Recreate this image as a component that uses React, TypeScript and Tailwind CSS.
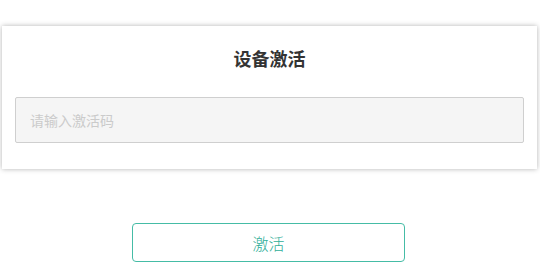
export default function App() {
  return (
    <div className="h-[270px] w-[540px] bg-white pt-[26px] font-['Noto_Sans_CJK_SC',sans-serif]">
      <div className="ml-[2px] mr-[3px] bg-white px-[13px] pb-[26px] pt-[20px] shadow-[0_0_5px_rgba(0,0,0,0.3)]">
        <h1 className="text-center text-[18px] leading-[24px] font-bold text-[#333]">设备激活</h1>
        <input
          className="mt-[27px] block h-[46px] w-full rounded-[2px] border border-[#cfcfcf] bg-[#f5f5f5] px-[14px] text-[14px] text-[#333] outline-none placeholder:text-[#cbcbcb]"
          placeholder="请输入激活码"
        />
      </div>
      <div className="mt-[54px] flex justify-center pr-[3px]">
        <button className="h-[39px] w-[273px] rounded-[4px] border border-[#45bca6] bg-white text-[16px] font-light text-[#2fae98]">
          激活
        </button>
      </div>
    </div>
  );
}
